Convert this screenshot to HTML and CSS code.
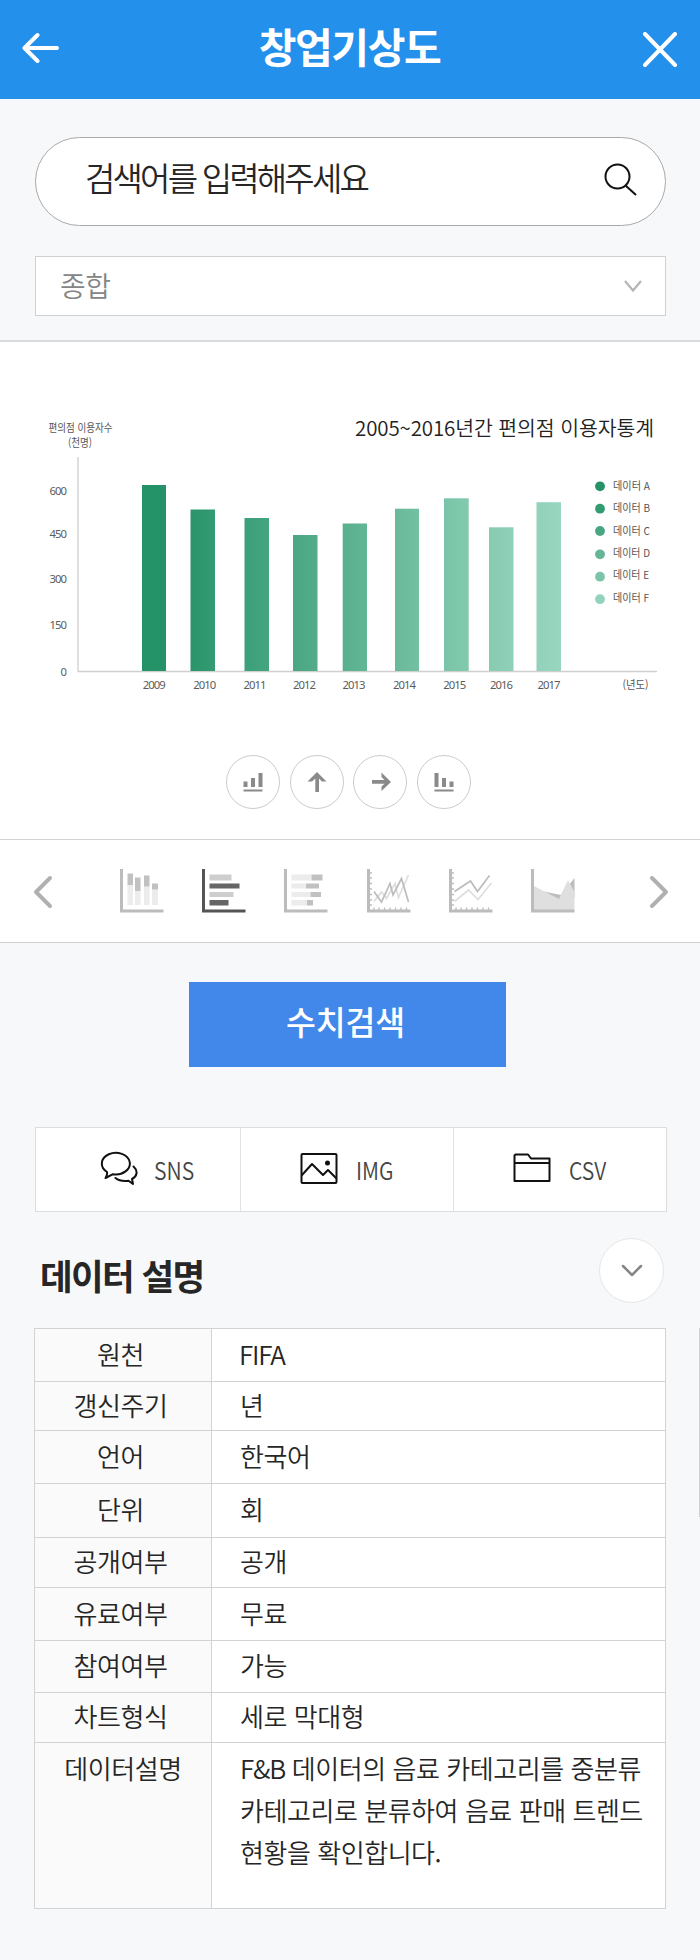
FILE: index.html
```html
<!DOCTYPE html>
<html lang="ko">
<head>
<meta charset="utf-8">
<title>창업기상도</title>
<link rel="stylesheet" href="styles.css">
</head>
<body>
<header class="topbar">
  <svg class="back" width="38" height="32" viewBox="0 0 38 32"><path d="M35 16H3M15.500 3L2.500 16l13 13"/></svg>
  <h1>창업기상도</h1>
  <svg class="close" width="36" height="36" viewBox="0 0 36 36"><path d="M3 2l30 31M33 2L3 33"/></svg>
</header>

<section class="filters">
  <div class="search">
    <span>검색어를 입력해주세요</span>
    <svg width="34" height="34" viewBox="0 0 34 34"><circle cx="13.500" cy="13.500" r="12"/><path d="M21.500 22.500L32 32"/></svg>
  </div>
  <div class="select">
    <span>종합</span>
    <svg width="20" height="14" viewBox="0 0 20 14"><path d="M2 2l8 9.500L18 2"/></svg>
  </div>
</section>

<section class="chart-panel">
  <svg class="chart" width="700" height="360" viewBox="0 342 700 360">
    <defs>
      <linearGradient id="g1"><stop stop-color="#249368"/><stop offset="1" stop-color="#259166"/></linearGradient>
      <linearGradient id="g2"><stop stop-color="#2a946a"/><stop offset="1" stop-color="#349b73"/></linearGradient>
      <linearGradient id="g3"><stop stop-color="#3b9f79"/><stop offset="1" stop-color="#45a580"/></linearGradient>
      <linearGradient id="g4"><stop stop-color="#4aa683"/><stop offset="1" stop-color="#54ac8a"/></linearGradient>
      <linearGradient id="g5"><stop stop-color="#59b08e"/><stop offset="1" stop-color="#61b695"/></linearGradient>
      <linearGradient id="g6"><stop stop-color="#68b999"/><stop offset="1" stop-color="#74c0a2"/></linearGradient>
      <linearGradient id="g7"><stop stop-color="#79c4a8"/><stop offset="1" stop-color="#82caae"/></linearGradient>
      <linearGradient id="g8"><stop stop-color="#87cbb1"/><stop offset="1" stop-color="#8fd0b8"/></linearGradient>
      <linearGradient id="g9"><stop stop-color="#93d2ba"/><stop offset="1" stop-color="#98d6bf"/></linearGradient>
    </defs>
    <text class="chart-title" x="355" y="435.500" textLength="299">2005~2016년간 편의점 이용자통계</text>
    <g class="small">
      <text x="48.500" y="431.500" textLength="64" lengthAdjust="spacingAndGlyphs">편의점 이용자수</text>
      <text x="68" y="447" textLength="24" lengthAdjust="spacingAndGlyphs">(천명)</text>
    </g>
    <g class="num">
      <text x="49.500" y="495" textLength="17.500">600</text>
      <text x="49.500" y="538" textLength="17.500">450</text>
      <text x="49.500" y="583" textLength="17.500">300</text>
      <text x="49.500" y="628.500" textLength="17.500">150</text>
      <text x="60.500" y="675.500">0</text>
    </g>
    <path class="axis" d="M78 457V671.500H657"/>
    <rect x="142" y="485" width="24" height="186" fill="url(#g1)"/>
    <rect x="190.500" y="509.500" width="24.500" height="161.500" fill="url(#g2)"/>
    <rect x="244.500" y="518" width="24.500" height="153" fill="url(#g3)"/>
    <rect x="293" y="535" width="24.500" height="136" fill="url(#g4)"/>
    <rect x="342.700" y="523.500" width="24.300" height="147.500" fill="url(#g5)"/>
    <rect x="395" y="508.700" width="24" height="162.300" fill="url(#g6)"/>
    <rect x="444" y="498.300" width="24.700" height="172.700" fill="url(#g7)"/>
    <rect x="489" y="527.300" width="24.500" height="143.700" fill="url(#g8)"/>
    <rect x="536.500" y="502.200" width="24.500" height="168.800" fill="url(#g9)"/>
    <g class="num">
      <text x="142.700" y="688.500" textLength="23">2009</text>
      <text x="193.200" y="688.500" textLength="23">2010</text>
      <text x="243.500" y="688.500" textLength="23">2011</text>
      <text x="293" y="688.500" textLength="23">2012</text>
      <text x="342.500" y="688.500" textLength="23">2013</text>
      <text x="393" y="688.500" textLength="23">2014</text>
      <text x="443.300" y="688.500" textLength="23">2015</text>
      <text x="490" y="688.500" textLength="23">2016</text>
      <text x="537.500" y="688.500" textLength="23">2017</text>
    </g>
    <g class="small">
      <text x="622.500" y="688.500" textLength="26" lengthAdjust="spacingAndGlyphs">(년도)</text>
      <text x="613" y="490" textLength="37" lengthAdjust="spacingAndGlyphs">데이터 A</text>
      <text x="613" y="512.300" textLength="37" lengthAdjust="spacingAndGlyphs">데이터 B</text>
      <text x="613" y="534.600" textLength="37" lengthAdjust="spacingAndGlyphs">데이터 C</text>
      <text x="613" y="557" textLength="37" lengthAdjust="spacingAndGlyphs">데이터 D</text>
      <text x="613" y="579.300" textLength="36" lengthAdjust="spacingAndGlyphs">데이터 E</text>
      <text x="613" y="601.800" textLength="36" lengthAdjust="spacingAndGlyphs">데이터 F</text>
    </g>
    <circle cx="600" cy="486.300" r="4.900" fill="#249166"/>
    <circle cx="600" cy="508.700" r="4.900" fill="#329b72"/>
    <circle cx="600" cy="531" r="4.900" fill="#48a782"/>
    <circle cx="600" cy="554.300" r="4.900" fill="#64b697"/>
    <circle cx="600" cy="576.700" r="4.900" fill="#7dc5a9"/>
    <circle cx="600" cy="599.200" r="4.900" fill="#92d3bb"/>
  </svg>
  <div class="tools">
    <span class="tool"><svg width="20" height="20" viewBox="0 0 20 20"><path d="M.500 9.500h4V15h-4zM8 6h4v9H8zM15.500 1h4v14h-4zM.500 17.500h19v2H.500z"/></svg></span>
    <span class="tool"><svg width="20" height="20" viewBox="0 0 20 20"><path d="M10 0L19.500 9.500h-4.500L12 6.500V20H8.300V6.500L5 9.500H.500z"/></svg></span>
    <span class="tool"><svg width="20" height="20" viewBox="0 0 20 20"><path d="M20 10L10.500 19v-4.500L13.500 11.800H1V8H13.500L10.500 5V.500z"/></svg></span>
    <span class="tool"><svg width="20" height="20" viewBox="0 0 20 20"><path d="M.500 1h4v14h-4zM8 6h4v9H8zM15.500 9.500h4V15h-4zM.500 17.500h19v2H.500z"/></svg></span>
  </div>
</section>

<nav class="types">
  <svg class="arrow" width="20" height="34" viewBox="0 0 20 34"><path d="M17 3L3 17l14 14"/></svg>
  <div class="type-list">
    <svg width="44" height="44" viewBox="0 0 44 44">
      <path fill="#ececec" d="M7.500 16H13v20H7.500zM15 22h5.500v14H15zM24 17.500h5.500V36H24zM32 20.500h6V36h-6z"/>
      <path fill="#c1c1c1" d="M7.500 4.500H13V16H7.500zM15 8.500h5.500V22H15zM24 6.500h5.500v11H24zM32 14.500h6v6h-6z"/>
      <path fill="#bcbcbc" d="M0 0h3v40.500h40.500v3H0z"/>
    </svg>
    <svg width="44" height="44" viewBox="0 0 44 44">
      <path fill="#cecece" d="M7.500 5.500h22v6h-22zM7.500 23h24v5h-24z"/>
      <path fill="#666" d="M7.500 14.500h30v5h-30zM7.500 31h19v5.500h-19z"/>
      <path fill="#555" d="M0 0h3v40.500h40.500v3H0z"/>
    </svg>
    <svg width="44" height="44" viewBox="0 0 44 44">
      <path fill="#ececec" d="M7.500 5.500h20v6h-20zM7.500 14.500H22v5H7.500zM7.500 23h19v5h-19zM7.500 31H23v5.500H7.500z"/>
      <path fill="#c1c1c1" d="M27.500 5.500h11v6h-11zM22 14.500h13v5H22zM26.500 23H37v5H26.500zM23 31h6v5.500h-6z"/>
      <path fill="#bcbcbc" d="M0 0h3v40.500h40.500v3H0z"/>
    </svg>
    <svg width="44" height="44" viewBox="0 0 44 44">
      <path class="ticks" d="M3 4h2M3 9h2M3 14.500h2M3 20h2M3 25.500h2M3 31h2M3 36h2M7 41v-2.500M12 41v-2.500M17.500 41v-2.500M23 41v-2.500M28.500 41v-2.500M34 41v-2.500M39.500 41v-2.500"/>
      <path class="trend pale" d="M7 32.500L14.500 23l5 6.500L28 14.500l3.500 14L41.500 6"/>
      <path class="trend" d="M7 22.500L14.500 33 23 14.500l3 11.500L34.500 9.500l7 23.500"/>
      <path fill="#bcbcbc" d="M0 0h3v40.500h40.500v3H0z"/>
    </svg>
    <svg width="44" height="44" viewBox="0 0 44 44">
      <path class="ticks" d="M3 4h2M3 9h2M3 14.500h2M3 20h2M3 25.500h2M3 31h2M3 36h2M7 41v-2.500M12 41v-2.500M17.500 41v-2.500M23 41v-2.500M28.500 41v-2.500M34 41v-2.500M39.500 41v-2.500"/>
      <path class="trend pale" d="M5.500 32.500L19.500 21l9.500 9.500L42.500 14"/>
      <path class="trend" d="M5.500 22.500L21.500 12l7 10.500L40.500 6.500"/>
      <path fill="#bcbcbc" d="M0 0h3v40.500h40.500v3H0z"/>
    </svg>
    <svg width="44" height="44" viewBox="0 0 44 44">
      <path fill="#bdbdbd" d="M13 22.500l17 3.500L43.500 9v20L28 32z"/>
      <path fill="#dfdfdf" d="M3 17l25 13L37 11l6.500 12v18H3z"/>
      <path fill="#bcbcbc" d="M0 0h3v40.500h40.500v3H0z"/>
    </svg>
  </div>
  <svg class="arrow" width="20" height="34" viewBox="0 0 20 34"><path d="M3 3l14 14L3 31"/></svg>
</nav>

<main class="content">
  <div class="query">수치검색</div>

  <div class="exports">
    <div class="export">
      <svg width="38" height="36" viewBox="0 0 38 36"><path d="M7 21A14 10.800 0 1 1 13 23.200L5.500 27Q7.500 24.500 7 21z"/><path d="M33.500 15.500C38.500 20 37 25.500 32 28L33 33 28.500 29.800C23 30.500 18.500 29.500 15.500 27"/></svg>
      <span>SNS</span>
    </div>
    <div class="export">
      <svg width="38" height="36" viewBox="0 0 38 36"><rect x="1.500" y="3" width="35" height="29" rx="1"/><path d="M2 24l10-11 11 11 5-5 8 8"/><circle cx="27.500" cy="12" r="1.500" fill="#111"/></svg>
      <span>IMG</span>
    </div>
    <div class="export">
      <svg width="38" height="36" viewBox="0 0 38 36"><path d="M2.500 3.500H15l3 4H36.500V30h-35V4.500zM1.500 12h35"/></svg>
      <span>CSV</span>
    </div>
  </div>

  <div class="heading">
    <h2>데이터 설명</h2>
    <div class="toggle"><svg width="24" height="16" viewBox="0 0 24 16"><path d="M3 3l9 9 9-9"/></svg></div>
  </div>

  <dl class="info">
    <dt>원천</dt><dd class="latin">FIFA</dd>
    <dt>갱신주기</dt><dd>년</dd>
    <dt>언어</dt><dd>한국어</dd>
    <dt>단위</dt><dd>회</dd>
    <dt>공개여부</dt><dd>공개</dd>
    <dt>유료여부</dt><dd>무료</dd>
    <dt>참여여부</dt><dd>가능</dd>
    <dt>차트형식</dt><dd>세로 막대형</dd>
    <dt class="tall">데이터설명</dt><dd class="tall"><p><span class="tight">F&amp;B</span> 데이터의 음료 카테고리를 중분류<br>카테고리로 분류하여 음료 판매 트렌드<br>현황을 확인합니다.</p></dd>
  </dl>
</main>
<div class="scrollbar"></div>
</body>
</html>
```
FILE: styles.css
```css
* { box-sizing: border-box; }

body {
  position: relative;
  margin: 0;
  width: 700px;
  height: 1960px;
  overflow: hidden;
  background: #f7f8fa;
  color: #262626;
  font-family: "Noto Sans CJK KR", "Noto Sans", sans-serif;
}

svg { display: block; flex: none; fill: none; }
h1, h2, dl, dd, p { margin: 0; }

.topbar {
  display: grid;
  grid-template-columns: 120px 1fr 120px;
  align-items: center;
  height: 99px;
  padding: 0 21px 3px;
  background: #2390ec;
  color: #fff;
}
.topbar svg { stroke: #fff; stroke-width: 4; stroke-linecap: round; stroke-linejoin: round; }
.topbar .back { margin-left: 1px; }
.topbar .close { justify-self: end; margin-top: 4px; margin-right: 1px; }
.topbar h1 {
  text-align: center;
  font-size: 41px;
  line-height: 60px;
  font-weight: 700;
  letter-spacing: -1.4px;
  padding: 0 1px 6px 0;
}

.filters {
  display: flex;
  flex-direction: column;
  gap: 30px;
  height: 243px;
  padding: 38px 34px 0 35px;
  border-bottom: 2px solid #d9dadc;
}
.search {
  display: flex;
  justify-content: space-between;
  align-items: center;
  height: 89px;
  padding: 0 27px 0 49px;
  border: 1px solid #a9a9a9;
  border-radius: 45px;
  background: #fff;
}
.search span { font-size: 33px; line-height: 48px; font-weight: 350; letter-spacing: -2.8px; padding-bottom: 9px; }
.search svg { stroke: #111; stroke-width: 2; margin-bottom: 4px; }
.select {
  display: flex;
  justify-content: space-between;
  align-items: center;
  height: 60px;
  padding: 0 22px 0 24px;
  border: 1px solid #cfd0d2;
  background: #fff;
  color: #858585;
}
.select span { font-size: 28px; line-height: 40px; font-weight: 350; letter-spacing: -.5px; padding-bottom: 3px; }
.select svg { stroke: #b5b5b5; stroke-width: 2.2; }

.chart-panel {
  height: 498px;
  background: #fff;
  border-bottom: 1px solid #d3d3d3;
}
.chart-title { font-size: 20.5px; fill: #222; font-weight: 350; }
.small { font-size: 11px; fill: #555; }
.num { font-family: "Noto Sans", sans-serif; font-size: 11.3px; fill: #5c5c5c; }
.axis { stroke: #cfcfcf; stroke-width: 1.3; }
.tools { display: flex; justify-content: center; gap: 9.7px; padding: 53px 3px 0 0; }
.tool {
  display: grid;
  place-items: center;
  width: 54px;
  height: 54px;
  border: 1px solid #cbcbcb;
  border-radius: 50%;
  padding-bottom: 1px;
}
.tool path { fill: #8a8a8a; }
.tool:nth-child(3) svg { margin-left: 2px; }

.types {
  display: flex;
  justify-content: space-between;
  align-items: center;
  height: 103px;
  padding: 2px 31px 0 33px;
  border-bottom: 1px solid #cfd0d1;
  background: #fff;
}
.arrow path { stroke: #b0b0b0; stroke-width: 4; stroke-linecap: round; stroke-linejoin: round; }
.type-list { display: flex; gap: 38.2px; margin-top: -3px; margin-right: 7px; }
.ticks { stroke: #bcbcbc; stroke-width: 1.3; }
.trend { stroke: #bcbcbc; stroke-width: 1.7; }
.pale { stroke: #dedede; }

.content { padding: 39px 35px 0; }
.query {
  width: 317px;
  height: 85px;
  margin: 0 0 0 154px;
  background: #4288ea;
  color: #fff;
  text-align: center;
  font-size: 32.5px;
  line-height: 78px;
  font-weight: 500;
  letter-spacing: -.2px;
  padding-right: 4px;
}

.exports {
  display: grid;
  grid-template-columns: 204px 213px 1fr;
  width: 632px;
  height: 85px;
  margin-top: 60px;
  border: 1px solid #dcdddf;
  background: #fff;
}
.export { display: flex; align-items: center; gap: 18px; padding: 0 0 2px 58.500px; border-left: 1px solid #e3e3e4; }
.export:first-child { padding-left: 64px; border-left: 0; gap: 16px; }
.export svg { stroke: #111; stroke-width: 2; stroke-linejoin: round; stroke-linecap: round; }
.export span { font-size: 24px; line-height: 34px; font-weight: 350; color: #444; transform: scaleX(.88); transform-origin: 0 50%; padding-top: 2px; }

.heading { display: flex; justify-content: space-between; height: 91px; padding: 26px 1px 0 5px; }
.heading h2 { font-size: 35.5px; line-height: 50px; font-weight: 600; letter-spacing: -1.6px; padding-top: 12px; }
.toggle {
  display: grid;
  place-items: center;
  width: 65px;
  height: 65px;
  border: 1px solid #e6e6e6;
  border-radius: 50%;
  background: #fff;
}
.toggle path { stroke: #858585; stroke-width: 2.5; stroke-linecap: round; stroke-linejoin: round; }

.info {
  display: grid;
  grid-template-columns: 177px 1fr;
  grid-template-rows: 53px 49px 53px 54px 50px 53px 52px 50px 166px;
  width: 632px;
  margin: 25px 0 0 -1px;
  border: solid #d2d3d4;
  border-width: 1px 1px 0 1px;
  font-size: 26px;
  line-height: 42px;
  font-weight: 350;
  letter-spacing: -.45px;
}
.info dt, .info dd {
  display: flex;
  align-items: center;
  padding-bottom: 3px;
  border-bottom: 1px solid #d2d3d4;
  white-space: nowrap;
}
.info dt { justify-content: center; padding-right: 5px; background: #fafafa; border-right: 1px solid #d2d3d4; }
.info dd { padding-left: 28px; background: #fff; }
.info .latin { padding-left: 27px; letter-spacing: -1.2px; }
.info .tight { letter-spacing: -1.2px; }
.info .tall { align-items: flex-start; padding-top: 4px; }
.info dt.tall { padding-right: 0; }

/* Page scroll thumb, over the right edge */
.scrollbar { position: absolute; top: 1328px; right: 0; width: 1px; height: 189px; background: #cfd0d2; }
```
